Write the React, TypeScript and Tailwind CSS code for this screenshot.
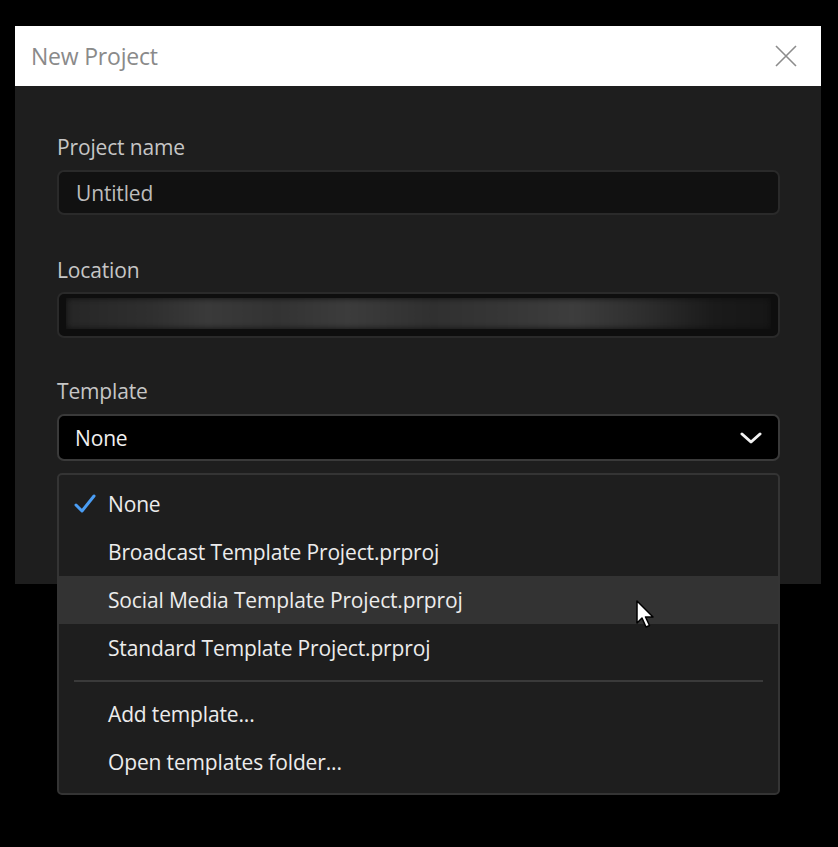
import React from 'react';

const items = [
  { label: 'None', checked: true },
  { label: 'Broadcast Template Project.prproj' },
  { label: 'Social Media Template Project.prproj', hover: true },
  { label: 'Standard Template Project.prproj' },
];

const CloseIcon = () => (
  <svg width="22" height="22" viewBox="0 0 22 22" fill="none" stroke="#8c8c8c" strokeWidth="1.6">
    <path d="M1 1 L21 21 M21 1 L1 21" />
  </svg>
);

const Chevron = () => (
  <svg width="22" height="14" viewBox="0 0 22 14" fill="none" stroke="#f2f2f2" strokeWidth="3" strokeLinecap="round" strokeLinejoin="round">
    <path d="M2 3 L11 11 L20 3" />
  </svg>
);

const Check = () => (
  <svg width="22" height="20" viewBox="0 0 22 20" fill="none" stroke="#4a9df4" strokeWidth="3" strokeLinecap="round" strokeLinejoin="round">
    <path d="M2 11 L8 17 L20 2" />
  </svg>
);

const Cursor = () => (
  <svg width="20" height="30" viewBox="0 0 20 30">
    <path d="M1 1 L1 23 L6 18 L10 27 L13.5 25.5 L9.5 17 L17 17 Z" fill="#ffffff" stroke="#000000" strokeWidth="1.5" strokeLinejoin="round" />
  </svg>
);

const txt = 'text-[21px] font-medium tracking-[-0.15px]';

export default function App() {
  return (
    <div className="w-[838px] h-[847px] bg-black overflow-hidden pt-[26px] pl-[15px] font-['Open_Sans','Lato',sans-serif]">
      <div className="relative w-[806px]">
        <div className="h-[60px] bg-white flex items-center justify-between pl-[16px] pr-[24px]">
          <span className="text-[23px] text-[#8a8a8a] tracking-[-0.2px] pt-[1px]">New Project</span>
          <CloseIcon />
        </div>
        <div className="h-[498px] bg-[#1e1e1e] pt-[49px] pl-[42px] pr-[41px]">
          <div className={`${txt} leading-6 text-[#c6c6c6]`}>Project name</div>
          <div className="mt-[11px] h-[45px] rounded-[7px] bg-[#111111] border-2 border-[#2a2a2a] flex items-center pl-[17px]">
            <span className={`${txt} text-[#bcbcbc] pt-[2px]`}>Untitled</span>
          </div>
          <div className={`mt-[43px] ${txt} leading-6 text-[#c6c6c6]`}>Location</div>
          <div className="mt-[10px] h-[46px] rounded-[7px] bg-[#0e0e0e] border-2 border-[#2a2a2a] px-[7px] pt-[4px]">
            <div className="h-[31px] overflow-hidden">
              <div className="h-full blur-[3px] bg-[linear-gradient(90deg,#262626_0%,#2f2f2f_12%,#3a3a3a_20%,#333333_30%,#3c3c3c_40%,#303030_52%,#363636_62%,#3d3d3d_72%,#2e2e2e_82%,#1a1a1a_92%,#161616_100%)]" />
            </div>
          </div>
          <div className={`mt-[41px] ${txt} leading-6 text-[#c6c6c6]`}>Template</div>
          <div className="mt-[11px] h-[47px] rounded-[7px] bg-black border-2 border-[#3a3a3a] flex items-center justify-between pl-[16px] pr-[16px]">
            <span className={`${txt} text-[#f0f0f0] pt-[2px]`}>None</span>
            <Chevron />
          </div>
        </div>

        <div className="absolute left-[42px] top-[447px] w-[723px] h-[322px] rounded-[5px] bg-[#1e1e1e] border-2 border-[#343434] pt-[5px]">
          {items.map((it) => (
            <div
              key={it.label}
              className={`h-[48px] flex items-center ${it.hover ? 'bg-[#333333]' : ''}`}
            >
              <div className="w-[49px] flex justify-start pl-[15px]">{it.checked && <Check />}</div>
              <span className={`${txt} text-[#ececec] pt-[2px]`}>{it.label}</span>
            </div>
          ))}
          <div className="mx-[15px] my-[8px] h-[2px] bg-[#3a3a3a]" />
          <div className="h-[48px] flex items-center pl-[49px]">
            <span className={`${txt} text-[#ececec] pt-[2px]`}>Add template...</span>
          </div>
          <div className="h-[48px] flex items-center pl-[49px]">
            <span className={`${txt} text-[#ececec] pt-[2px]`}>Open templates folder...</span>
          </div>
          <div className="absolute left-[577px] top-[125px]">
            <Cursor />
          </div>
        </div>
      </div>
    </div>
  );
}
